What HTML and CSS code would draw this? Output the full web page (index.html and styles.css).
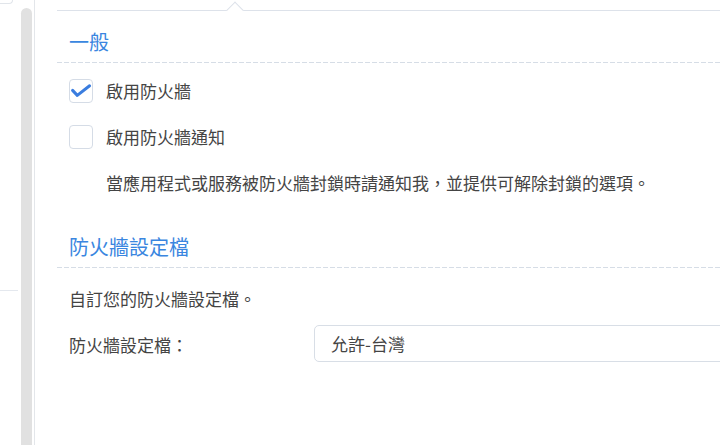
FILE: index.html
```html
<!DOCTYPE html>
<html lang="zh-TW">
<head>
<meta charset="utf-8">
<title>防火牆</title>
<link rel="stylesheet" href="styles.css">
</head>
<body>
<div class="app">
  <aside class="sidebar">
    <div class="list">
      <div class="card-end"></div>
      <div class="divider"></div>
    </div>
    <div class="scroll"></div>
  </aside>
  <main class="main">
    <div class="panel">
      <div class="tabline"></div>

      <h2 class="heading first">一般</h2>
      <div class="dash"></div>

      <label class="check-row first-row">
        <span class="box">
          <svg width="24" height="24" viewBox="0 0 24 24"><path d="M3.6 11.4 L8.3 16.4 L20.6 6.8" fill="none" stroke="#3a7ddf" stroke-width="3" stroke-linecap="round" stroke-linejoin="round"/></svg>
        </span>
        <span class="label">啟用防火牆</span>
      </label>
      <label class="check-row second-row">
        <span class="box"></span>
        <span class="label">啟用防火牆通知</span>
      </label>
      <p class="desc">當應用程式或服務被防火牆封鎖時請通知我，並提供可解除封鎖的選項。</p>

      <h2 class="heading second">防火牆設定檔</h2>
      <div class="dash"></div>

      <p class="note">自訂您的防火牆設定檔。</p>
      <div class="field">
        <span class="field-label">防火牆設定檔：</span>
        <div class="select">允許-台灣</div>
      </div>
    </div>
  </main>
</div>
</body>
</html>
```
FILE: styles.css
```css
html, body {
  margin: 0;
  padding: 0;
  width: 720px;
  height: 445px;
  overflow: hidden;
  background: #ffffff;
}

body {
  font-family: "Noto Sans CJK TC", "Noto Sans", sans-serif;
  color: #444444;
}

.app {
  display: flex;
  height: 445px;
}

.sidebar {
  width: 34px;
  flex: none;
  display: flex;
  border-right: 1px solid #e3e6ea;
}

.list {
  width: 19px;
  flex: none;
}

.card-end {
  width: 12px;
  height: 3px;
  border: 1px solid #e1e5ea;
  border-top: none;
  border-left: none;
  border-radius: 0 0 4px 0;
}

.divider {
  margin-top: 286px;
  width: 18px;
  height: 1px;
  background: #e4e8ee;
}

.scroll {
  width: 11px;
  margin-left: 2px;
  margin-top: 8px;
  background: #e1e1e1;
  border-radius: 6px 6px 0 0;
}

.main {
  flex: 1;
  overflow: hidden;
  padding-left: 22px;
}

.panel {
  width: 760px;
}

.tabline {
  height: 10px;
  border-bottom: 1px solid #dde2ea;
  position: relative;
}

.tabline::after {
  content: "";
  position: absolute;
  left: 172px;
  top: 4px;
  width: 11px;
  height: 11px;
  background: #ffffff;
  border-top: 1px solid #dde2ea;
  border-left: 1px solid #dde2ea;
  transform: rotate(45deg);
}

.heading {
  margin: 0;
  padding-left: 12px;
  font-size: 20px;
  font-weight: normal;
  line-height: 28px;
  color: #3a86e0;
}

.heading.first {
  margin-top: 17px;
  padding-bottom: 6px;
}

.heading.second {
  margin-top: 38px;
  padding-bottom: 6px;
}

.dash {
  height: 1px;
  background: repeating-linear-gradient(to right, #d6dde6 0 5px, transparent 5px 7px);
}

.check-row {
  display: flex;
  align-items: center;
  padding-left: 12px;
  height: 24px;
  font-size: 17px;
}

.first-row {
  margin-top: 16px;
}

.second-row {
  margin-top: 22px;
}

.box {
  width: 22px;
  height: 22px;
  border: 1px solid #d5dce6;
  border-radius: 4px;
  flex: none;
  display: flex;
}

.box svg {
  margin: -1px;
}

.label {
  margin-left: 13px;
  line-height: 24px;
}

.desc {
  margin: 22px 0 0;
  padding-left: 49px;
  font-size: 17px;
  line-height: 24px;
}

.note {
  margin: 19px 0 0;
  padding-left: 12px;
  font-size: 17px;
  line-height: 24px;
}

.field {
  display: flex;
  align-items: center;
  margin-top: 14px;
  padding-left: 12px;
  font-size: 17px;
}

.field-label {
  width: 245px;
  flex: none;
  line-height: 24px;
  padding-top: 3px;
}

.select {
  flex: 1;
  height: 35px;
  line-height: 35px;
  border: 1px solid #d8dee6;
  border-radius: 5px;
  padding-left: 16px;
}
```
